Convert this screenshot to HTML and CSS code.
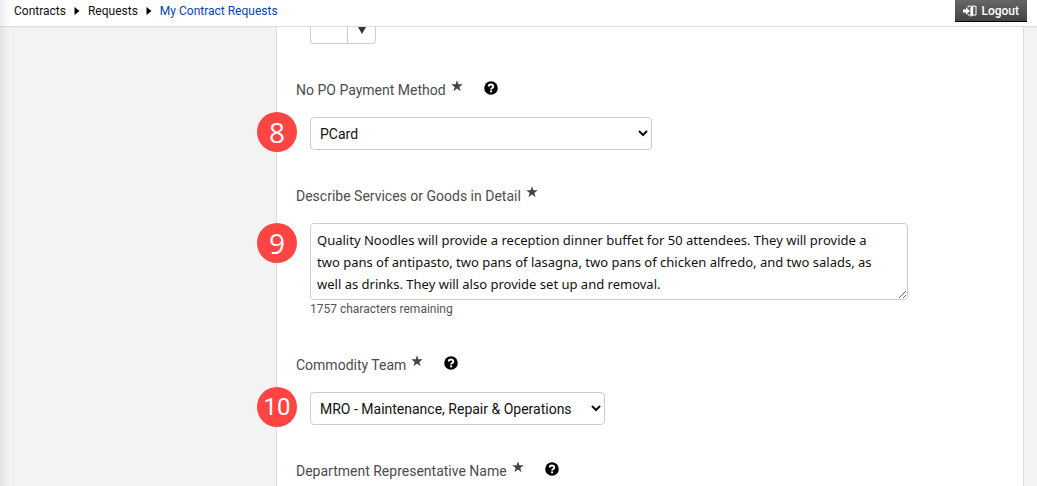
FILE: index.html
```html
<!DOCTYPE html>
<html lang="en">
<head>
    <meta charset="UTF-8">
    <title>My Contract Requests</title>
    <link rel="stylesheet" href="styles.css">
</head>

<body>

<!-- shapes used more than once -->
<svg class="sprite" aria-hidden="true">
    <symbol id="star" viewBox="0 0 12 12">
        <path d="M6 0.2 L7.4 4.3 H11.8 L8.3 6.9 L9.6 11.2 L6 8.6 L2.4 11.2 L3.7 6.9 L0.2 4.3 H4.6 Z"/>
    </symbol>
    <symbol id="help" viewBox="0 0 14 14">
        <circle cx="7" cy="7" r="6.8"/>
        <path d="M4.7 5.6 C4.7 2.8 9.3 2.8 9.3 5.5 C9.3 7 7.1 7 7.1 8.5" fill="none" stroke="#fff" stroke-width="1.9"/>
        <rect x="6.1" y="9.4" width="2" height="1.9" fill="#fff"/>
    </symbol>
</svg>

<header class="topbar">
    <nav class="breadcrumb">
        <a href="#">Contracts</a>
        <svg class="crumbArrow" viewBox="0 0 5 8"><path d="M0 0 L5 4 L0 8 Z"/></svg>
        <a href="#">Requests</a>
        <svg class="crumbArrow" viewBox="0 0 5 8"><path d="M0 0 L5 4 L0 8 Z"/></svg>
        <a href="#" class="current">My Contract Requests</a>
    </nav>
    <button type="button" class="logout">
        <svg class="logoutIcon" viewBox="0 0 14 12">
            <path d="M0 4.6 H3 V2.2 L7 6 L3 9.8 V7.4 H0 Z" fill="#fff"/>
            <path d="M5 2.4 V1.2 H13 V10 H10" fill="none" stroke="#fff" stroke-width="1"/>
            <path d="M5 9.4 V10 H7" fill="none" stroke="#fff" stroke-width="1"/>
            <path d="M7.4 2.6 L10.2 1.2 V10.4 L7.4 11.8 Z" fill="#fff"/>
        </svg>
        Logout
    </button>
</header>

<main class="page">
    <form class="panel">

        <div class="control combo">
            <button type="button" class="comboValue" aria-label="Value"></button>
            <button type="button" class="comboArrow" aria-label="Open list">
                <svg class="comboIcon" viewBox="0 0 8 7"><path d="M0 0 H8 L4 7 Z"/></svg>
            </button>
        </div>

        <div class="field">
            <div class="labelRow">
                <label for="payment">No PO Payment Method</label>
                <svg class="star"><use href="#star"/></svg>
                <button type="button" class="help" aria-label="Help"><svg class="helpIcon"><use href="#help"/></svg></button>
            </div>
            <div class="control">
                <span class="badge">8</span>
                <select id="payment" class="wide">
                    <option>PCard</option>
                </select>
            </div>
        </div>

        <div class="field">
            <div class="labelRow">
                <label for="details">Describe Services or Goods in Detail</label>
                <svg class="star"><use href="#star"/></svg>
            </div>
            <div class="control">
                <span class="badge top">9</span>
                <textarea id="details">Quality Noodles will provide a reception dinner buffet for 50 attendees. They will provide a two pans of antipasto, two pans of lasagna, two pans of chicken alfredo, and two salads, as well as drinks. They will also provide set up and removal.</textarea>
                <div class="remaining">1757 characters remaining</div>
            </div>
        </div>

        <div class="field">
            <div class="labelRow">
                <label for="team">Commodity Team</label>
                <svg class="star"><use href="#star"/></svg>
                <button type="button" class="help" aria-label="Help"><svg class="helpIcon"><use href="#help"/></svg></button>
            </div>
            <div class="control">
                <span class="badge double">10</span>
                <select id="team" class="medium">
                    <option>MRO - Maintenance, Repair &amp; Operations</option>
                </select>
            </div>
        </div>

        <div class="field">
            <div class="labelRow">
                <span>Department Representative Name</span>
                <svg class="star"><use href="#star"/></svg>
                <button type="button" class="help" aria-label="Help"><svg class="helpIcon"><use href="#help"/></svg></button>
            </div>
        </div>

    </form>
</main>

</body>
</html>
```
FILE: styles.css
```css
* {
    box-sizing: border-box;
}

body {
    margin: 0;
    height: 100vh;
    overflow: hidden;
    display: flex;
    flex-direction: column;
    background-color: #f3f3f3;
    font-family: Roboto, Arial, sans-serif;
    font-size: 14px;
    color: #4c4c4c;
}

/*soft shade down the left edge*/
body::before {
    content: "";
    position: absolute;
    top: 0;
    bottom: 0;
    left: 0;
    width: 10px;
    background: linear-gradient(to right, rgba(0, 0, 0, 0.07), rgba(0, 0, 0, 0));
}

.sprite {
    display: none;
}

.topbar {
    display: flex;
    justify-content: space-between;
    align-items: flex-start;
    height: 27px;
    padding: 0 10px 0 14px;
    background-color: #fff;
    border-bottom: 1px solid #ddd;
}

.breadcrumb {
    display: flex;
    align-items: center;
    gap: 8px;
    height: 22px;
    font-size: 12px;
}

.breadcrumb a {
    color: #111;
    text-decoration: none;
}

.breadcrumb .current {
    color: #0645ad;
}

.crumbArrow {
    width: 6px;
    height: 8px;
}

.logout {
    display: flex;
    align-items: center;
    gap: 4px;
    height: 22px;
    padding: 0 8px;
    border: 0;
    border-bottom: 1px solid #000;
    background: linear-gradient(#666, #444);
    color: #fff;
    font-family: inherit;
    font-size: 12px;
    font-weight: 500;
}

.logoutIcon {
    width: 14px;
    height: 12px;
}

.page {
    flex: 1;
    min-height: 0;
    overflow: hidden;
    padding: 0 13px 0 276px;
}

.panel {
    min-height: 100%;
    padding-left: 19px;
    background-color: #fff;
    border: solid #ddd;
    border-width: 0 1px;
}

.field {
    margin-top: 36px;
}

.labelRow {
    display: flex;
    align-items: center;
    height: 20px;
    margin-bottom: 17px;
}

.star {
    width: 12px;
    height: 12px;
    margin: 0 0 9px 5px;
    fill: #444;
}

.help {
    display: flex;
    margin: 0 0 4px 21px;
    padding: 0;
    border: 0;
    background: none;
}

.helpIcon {
    width: 14px;
    height: 14px;
}

.control {
    position: relative;
    margin-left: 14px;
}

/*number circle, hangs over the panel edge*/
.badge {
    position: absolute;
    top: -5px;
    left: -53px;
    width: 40px;
    height: 40px;
    border-radius: 50%;
    background-color: #ff4444;
    color: #fff;
    font-family: "Open Sans", sans-serif;
    font-size: 28px;
    line-height: 40px;
    text-align: center;
}

.top {
    top: 0;
}

.double {
    font-family: Roboto, Arial, sans-serif;
    font-size: 24px;
}

select {
    display: block;
    height: 33px;
    padding: 0 5px;
    border: 1px solid #ccc;
    border-radius: 4px;
    background-color: #fff;
    color: #111;
    font-family: inherit;
    font-size: 14px;
}

.wide {
    width: 342px;
}

.medium {
    width: 295px;
}

textarea {
    display: block;
    width: 598px;
    max-width: 100%;
    height: 77px;
    padding: 5px 20px 5px 6px;
    border: 1px solid #ccc;
    border-radius: 4px;
    color: #111;
    font-family: "Noto Sans", sans-serif;
    font-size: 13px;
    line-height: 22px;
}

.remaining {
    font-size: 12px;
    line-height: 19px;
    color: #555;
}

.combo {
    display: flex;
    width: 66px;
    height: 17px;
    border: 1px solid #ccc;
    border-top: 0;
    border-radius: 0 0 4px 4px;
}

.comboValue {
    flex: 1;
    border: 0;
    background: none;
}

.comboArrow {
    display: flex;
    justify-content: center;
    width: 28px;
    padding: 0;
    border: 0;
    border-left: 1px solid #ccc;
    background: none;
}

.comboIcon {
    width: 8px;
    height: 7px;
    fill: #333;
}
```
